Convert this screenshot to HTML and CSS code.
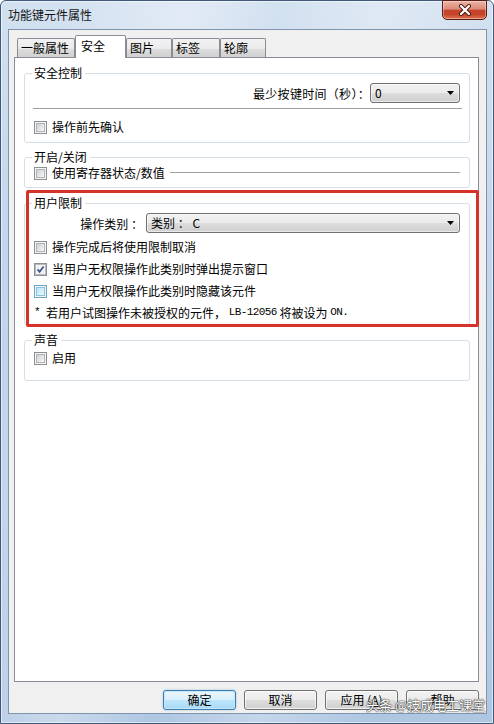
FILE: index.html
```html
<!DOCTYPE html>
<html lang="zh-CN">
<head>
<meta charset="utf-8">
<title>功能键元件属性</title>
<link rel="stylesheet" href="styles.css">
</head>
<body>
<div class="window">
  <div class="titlebar">
    <span class="title">功能键元件属性</span>
    <div class="close">
      <svg width="14" height="12" viewBox="0 0 14 12">
        <path d="M3 2 L11 10 M11 2 L3 10" stroke="#4a1a12" stroke-width="4" stroke-linecap="round" fill="none"/>
        <path d="M3 2 L11 10 M11 2 L3 10" stroke="#ffffff" stroke-width="2.2" stroke-linecap="round" fill="none"/>
      </svg>
    </div>
  </div>
  <div class="client">
    <div class="tabs">
      <div class="tab t1">一般属性</div>
      <div class="tab sel">安全</div>
      <div class="tab t3">图片</div>
      <div class="tab t4">标签</div>
      <div class="tab t5">轮廓</div>
    </div>
    <div class="panel">
      <fieldset class="grp g1">
        <legend>安全控制</legend>
        <div class="r-right">
          <span>最少按键时间（秒）：</span>
          <div class="combo c-small"><span>0</span><svg class="arrow" width="7" height="4" viewBox="0 0 7 4"><polygon points="0,0 7,0 3.5,4" fill="#000"/></svg></div>
        </div>
        <div class="sep"></div>
        <div class="chk"><span class="cb"><span class="in"></span></span><span>操作前先确认</span></div>
      </fieldset>

      <fieldset class="grp g2">
        <legend>开启/关闭</legend>
        <div class="chk"><span class="cb"><span class="in"></span></span><span>使用寄存器状态/数值</span><span class="line"></span></div>
      </fieldset>

      <fieldset class="grp g3">
        <legend>用户限制</legend>
        <div class="r-cat">
          <span class="lbl">操作类别 ：</span>
          <div class="combo c-wide"><span>类别 ：&nbsp;C</span><svg class="arrow" width="7" height="4" viewBox="0 0 7 4"><polygon points="0,0 7,0 3.5,4" fill="#000"/></svg></div>
        </div>
        <div class="chk tall"><span class="cb"><span class="in"></span></span><span>操作完成后将使用限制取消</span></div>
        <div class="chk tall"><span class="cb checked"><svg width="11" height="11" viewBox="0 0 11 11"><rect x="0.5" y="0.5" width="10" height="10" fill="#f3f3f3" stroke="#b8bcc2"/><path d="M2.6 5.4 L4.6 7.8 L8.6 2.6" stroke="#3d5590" stroke-width="1.7" fill="none"/></svg></span><span>当用户无权限操作此类别时弹出提示窗口</span></div>
        <div class="chk tall"><span class="cb hot"><span class="in"></span></span><span>当用户无权限操作此类别时隐藏该元件</span></div>
        <div class="note"><span class="mono">* </span><span>若用户试图操作未被授权的元件， </span><span class="mono">LB-12056</span><span> 将被设为 </span><span class="mono">ON.</span></div>
      </fieldset>

      <fieldset class="grp g4">
        <legend>声音</legend>
        <div class="chk"><span class="cb"><span class="in"></span></span><span>启用</span></div>
      </fieldset>
    </div>
    <div class="buttons">
      <div class="btn def">确定</div>
      <div class="btn">取消</div>
      <div class="btn">应用 (<u>A</u>)</div>
      <div class="btn">帮助</div>
    </div>
  </div>
  <div class="redbox"></div>
  <div class="watermark">头条 @技成电工课堂</div>
</div>
</body>
</html>
```

FILE: styles.css
```css
* { box-sizing: border-box; }
html, body { margin: 0; padding: 0; }
body {
  width: 494px;
  height: 724px;
  overflow: hidden;
  background: #ffffff;
  font-family: "Noto Sans CJK SC", "Microsoft YaHei", sans-serif;
  font-size: 12px;
  color: #000;
}

.window {
  position: relative;
  width: 494px;
  height: 724px;
  display: flex;
  flex-direction: column;
  border: 1px solid #40597a;
  border-radius: 6px 6px 0 0;
  background:
    linear-gradient(100deg, rgba(255,255,255,0) 10%, rgba(255,255,255,0.35) 30%, rgba(255,255,255,0) 45%, rgba(255,255,255,0.28) 62%, rgba(255,255,255,0) 80%),
    linear-gradient(180deg, #d3e1f0 0%, #c4d7ec 30%, #bdd2e9 70%, #aec6e2 100%);
  box-shadow: inset 0 0 0 1px rgba(255,255,255,0.55);
}

.titlebar {
  height: 28px;
  display: flex;
  justify-content: space-between;
  align-items: flex-start;
  padding-left: 7px;
}
.title {
  margin-top: 6px;
  line-height: 16px;
  font-size: 12px;
  color: #141414;
}
.close {
  width: 45px;
  height: 20px;
  margin-top: -1px;
  margin-right: 6px;
  border: 1px solid #5a1d14;
  border-radius: 0 0 5px 5px;
  background: linear-gradient(180deg, #ecb4a6 0%, #dd8a76 45%, #c4432a 52%, #c54529 75%, #e07656 100%);
  box-shadow: inset 0 0 0 1px rgba(255,255,255,0.35);
  display: flex;
  align-items: center;
  justify-content: center;
}

.client {
  flex: 1;
  display: flex;
  flex-direction: column;
  margin: 0 6px 9px 7px;
  border: 1px solid #7f95ae;
  background: #f0f0f0;
  padding: 5px 7px 3px 5px;
}

.tabs {
  display: flex;
  align-items: flex-end;
  height: 23px;
  padding-left: 3px;
}
.tab {
  height: 20px;
  border: 1px solid #898c95;
  border-bottom: none;
  border-radius: 2px 2px 0 0;
  background: linear-gradient(180deg, #f2f2f2 0%, #ebebeb 50%, #dddddd 51%, #cfcfcf 100%);
  padding-left: 3px;
  line-height: 18px;
  white-space: nowrap;
}
.t1 { width: 58px; }
.sel {
  width: 51px;
  height: 23px;
  background: #ffffff;
  position: relative;
  z-index: 1;
  padding-left: 5px;
  line-height: 19px;
}
.t3 { width: 46px; }
.t4 { width: 48px; }
.t5 { width: 46px; }

.panel {
  flex: 1;
  margin-top: -1px;
  border: 1px solid #898c95;
  background: #ffffff;
  padding: 0 8px 0 9px;
}

.grp {
  margin: 7px 0 0 0;
  padding: 2px 9px 7px 9px;
  border: 1px solid #d5dfe5;
  border-radius: 3px;
  min-width: 0;
}
.grp legend {
  padding: 0 3px 0 2px;
  margin-left: -2px;
  line-height: 16px;
  font-size: 12px;
}
.g2 { margin-top: 6px; padding-top: 0; padding-bottom: 6px; }
.g3 { padding-bottom: 2px; }
.g4 { padding-bottom: 14px; }

.r-right {
  display: flex;
  align-items: center;
  justify-content: flex-end;
  height: 20px;
}
.r-right > span { letter-spacing: 0.3px; }
.combo {
  height: 20px;
  border: 1px solid #707070;
  border-radius: 3px;
  background: linear-gradient(180deg, #f2f2f2 0%, #ebebeb 50%, #dddddd 51%, #cfcfcf 100%);
  box-shadow: inset 0 0 0 1px rgba(255,255,255,0.55);
  display: flex;
  align-items: center;
  justify-content: space-between;
  padding: 0 5px 0 4px;
  line-height: 16px;
}
.c-small { width: 90px; }
.c-wide { flex: 1; }
.arrow { display: block; flex: none; }

.sep {
  height: 2px;
  border-top: 1px solid #a0a0a0;
  border-bottom: 1px solid #ffffff;
  margin: 5px -2px 9px -1px;
}

.chk {
  display: flex;
  align-items: center;
  height: 16px;
  gap: 5px;
  line-height: 16px;
  white-space: nowrap;
}
.chk.tall { height: 22px; }
.line {
  flex: 1;
  height: 2px;
  border-top: 1px solid #a0a0a0;
  border-bottom: 1px solid #ffffff;
}

.cb {
  flex: none;
  width: 13px;
  height: 13px;
  border: 1px solid #8e8f8f;
  padding: 1px;
  background: #f4f4f4;
}
.cb .in {
  display: block;
  width: 9px;
  height: 9px;
  border: 1px solid #b0b4ba;
  background: linear-gradient(135deg, #cdd1d6 0%, #e6e8ea 60%, #f7f7f7 100%);
}
.cb.checked { padding: 0; }
.cb.checked svg { display: block; }
.cb.hot { border-color: #6fa3c4; }
.cb.hot .in {
  border-color: #86c4de;
  background: linear-gradient(135deg, #bfe5f6 0%, #d6effa 60%, #ecf8fd 100%);
}

.r-cat {
  display: flex;
  align-items: center;
  height: 20px;
  gap: 3px;
  margin-bottom: 3px;
}
.lbl {
  flex: none;
  width: 109px;
  text-align: right;
  white-space: nowrap;
}

.note {
  display: flex;
  align-items: center;
  height: 20px;
  white-space: pre;
}
.mono {
  font-family: "Liberation Mono", "DejaVu Sans Mono", monospace;
  font-size: 11px;
  letter-spacing: -0.6px;
}

.buttons {
  display: flex;
  justify-content: flex-end;
  gap: 8px;
  margin-top: 8px;
  height: 20px;
}
.btn {
  width: 73px;
  height: 20px;
  border: 1px solid #707070;
  border-radius: 3px;
  background: linear-gradient(180deg, #f2f2f2 0%, #ebebeb 50%, #dddddd 51%, #cfcfcf 100%);
  box-shadow: inset 0 0 0 1px rgba(255,255,255,0.7);
  display: flex;
  align-items: center;
  justify-content: center;
  line-height: 16px;
  white-space: nowrap;
}
.btn.def {
  border-color: #3c7fb1;
  background: linear-gradient(180deg, #eaf6fd 0%, #d9f0fc 50%, #bee6fd 51%, #a7d9f5 100%);
  box-shadow: inset 0 0 0 1px #c4e6f7, 0 0 2px rgba(60,127,177,0.5);
}

.redbox {
  position: absolute;
  left: 25px;
  top: 189px;
  width: 453px;
  height: 137px;
  border: 3px solid #d4322a;
  border-radius: 2px;
  pointer-events: none;
}
.watermark {
  position: absolute;
  left: 365px;
  top: 696px;
  font-size: 13px;
  line-height: 16px;
  color: #ffffff;
  text-shadow: 0 0 1px #333, 0 0 1px #333, 0 0 2px #555;
  white-space: nowrap;
}
```
